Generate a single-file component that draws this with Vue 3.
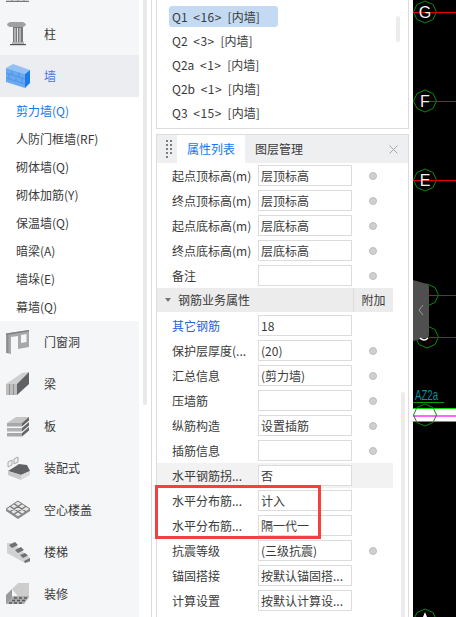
<script setup>
const subs = ['剪力墙(Q)','人防门框墙(RF)','砌体墙(Q)','砌体加筋(Y)','保温墙(Q)','暗梁(A)','墙垛(E)','幕墙(Q)']
const lower = [['door','门窗洞'],['beam','梁'],['slab','板'],['prefab','装配式'],['hollow','空心楼盖'],['stair','楼梯'],['finish','装修']]
const listItems = [
  { name: 'Q1', n: '<16>', active: true },
  { name: 'Q2', n: '<3>' },
  { name: 'Q2a', n: '<1>' },
  { name: 'Q2b', n: '<1>' },
  { name: 'Q3', n: '<15>' },
]
const rowsA = [
  ['起点顶标高(m)','层顶标高',true],['终点顶标高(m)','层顶标高',true],['起点底标高(m)','层底标高',true],['终点底标高(m)','层底标高',true],['备注','',true],
]
const rowsB = [
  { l:'其它钢筋', v:'18', blue:true },
  { l:'保护层厚度(...', v:'(20)', dot:true },
  { l:'汇总信息', v:'(剪力墙)', dot:true },
  { l:'压墙筋', v:'', dot:true },
  { l:'纵筋构造', v:'设置插筋', dot:true },
  { l:'插筋信息', v:'', dot:true },
  { l:'水平钢筋拐...', v:'否', shade:true },
  { l:'水平分布筋...', v:'计入' },
  { l:'水平分布筋...', v:'隔一代一' },
  { l:'抗震等级', v:'(三级抗震)', dot:true },
  { l:'锚固搭接', v:'按默认锚固搭...' },
  { l:'计算设置', v:'按默认计算设...' },
]
</script>

<template>
  <div class="app">
    <aside class="sidebar">
      <div class="nav">
        <div class="nav-item">
          <span class="ico"><svg width="24" height="24" viewBox="0 0 24 24"><rect x="0" y="17" width="23" height="4" fill="#d4d4d4"/><path d="M6 17v4M12 17v4M18 17v4" stroke="#888" fill="none"/><path d="M0 21.500h23" stroke="#777"/></svg></span>
        </div>
        <div class="nav-item">
          <span class="ico"><svg width="24" height="24" viewBox="0 0 24 24">
            <path d="M4 0h13q3 1.500 3 2.500T17 5H4Q1 4 1 2.500T4 0z" fill="#a0a0a0"/>
            <rect x="7" y="5" width="10" height="16" fill="#77797c"/>
            <path d="M9 6v14M11.500 6v14M14 6v14" stroke="#e6e6e6"/>
            <rect x="6" y="20" width="12" height="2" fill="#b4b4b4"/><rect x="4" y="22" width="16" height="1.200" fill="#555"/></svg></span>
          <span class="nav-label">柱</span>
        </div>
        <div class="nav-item on">
          <span class="ico"><svg width="24" height="24" viewBox="0 0 24 24">
            <path d="M0 4l7-4 17 6-5 4z" fill="#94c0f5"/><path d="M0 4l19 6v14L0 18z" fill="#6aa8f0"/><path d="M19 10l5-4v13l-5 5z" fill="#1e7ae8"/>
            <path d="M0 9l19 6M0 14l19 6M6 6.500v5M13 8.500v5M3 10v5M10 12.500v5M16 14v5" stroke="#4a90e4" stroke-width=".8" fill="none"/></svg></span>
          <span class="nav-label on-label">墙</span>
        </div>
        <ul class="subs">
          <li v-for="(s, i) in subs" :key="s" :class="{ cur: i === 0 }">{{ s }}</li>
        </ul>
        <div v-for="it in lower" :key="it[1]" class="nav-item">
          <span class="ico">
            <svg v-if="it[0] === 'door'" width="24" height="24" viewBox="0 0 24 24"><path d="M0 3.500L23 0v17l-11 2V6L5 7v17l-5-1z" fill="#a8a8a8"/><path d="M15 5l5.500-1v8L15 13z" fill="#f5f6f8"/><path d="M0 3.500L23 0v1.200L0 5z" fill="#7d7d7d"/><path d="M1.500 5v18" stroke="#8c8c8c" stroke-width="2"/></svg>
            <svg v-else-if="it[0] === 'beam'" width="24" height="24" viewBox="0 0 24 24"><path d="M0 12L16 1l7-1-12 12z" fill="#cfcfcf"/><path d="M11 12L23 0v12L11 23z" fill="#5f6165"/><rect y="12" width="11" height="11" fill="#bdbdbd"/><path d="M3.500 12v11M7.500 12v11" stroke="#909090"/></svg>
            <svg v-else-if="it[0] === 'slab'" width="24" height="24" viewBox="0 0 24 24"><path d="M1 9L10 3h13l-7 6z" fill="#c6c6c6"/><rect x="1" y="9" width="15" height="3.500" fill="#a8a8a8"/><rect x="1" y="14" width="15" height="3.500" fill="#b2b2b2"/><rect x="1" y="19" width="15" height="3.500" fill="#a8a8a8"/><path d="M16 9l7-6v3.500l-7 6zM16 14l7-6v3.500l-7 6zM16 19l7-6v3.500l-7 6z" fill="#666"/></svg>
            <svg v-else-if="it[0] === 'prefab'" width="24" height="24" viewBox="0 0 24 24"><path d="M2 6l4-2v5l-4 2zM8 3l4-2v5L8 8z" fill="#eee" stroke="#aaa"/><path d="M2 15l8-5 3-2 8 1 3 6-9 4z" fill="#5f6165"/><path d="M2 15l13 4v5L2 19z" fill="#c9c9c9"/><path d="M15 19l9-4v4l-9 5z" fill="#dadada"/></svg>
            <svg v-else-if="it[0] === 'hollow'" width="24" height="24" viewBox="0 0 24 24"><path d="M0 11L12 3l12 8-12 8z" fill="#e4e4e4" stroke="#777"/><path d="M4 8.300l12 8M8 5.700l12 8M20 8.300l-12 8M16 5.700l-12 8" stroke="#777" stroke-width="1.300"/><path d="M0 11l12 8 12-8v2l-12 8-12-8z" fill="#8a8a8a"/></svg>
            <svg v-else-if="it[0] === 'stair'" width="24" height="24" viewBox="0 0 24 24"><path d="M1 3h6l17 15v4l-5 1L1 13z" fill="#d2d2d2"/><path d="M3 5l6-3 3 3-6 3zM9 10l6-3 3 3-6 3zM14 15l5-2 3 2.500-5 2.500zM18 21l6-3v3l-5 2z" fill="#6f7175"/></svg>
            <svg v-else width="24" height="24" viewBox="0 0 24 24"><path d="M6 7l6-6h11v15L18 22z" fill="#cdcdcd"/><path d="M0 13l6-6v10l-6 5z" fill="#9a9a9a"/><path d="M0 22l7-8h16l-5 8z" fill="#adadad"/><path d="M8 16h3M13 16h3M18 16h3M6 18.500h3M11 18.500h3M16 18.500h3M3 21h3M8 21h3M13 21h3" stroke="#55575b" stroke-width="1.500"/></svg>
          </span>
          <span class="nav-label">{{ it[1] }}</span>
        </div>
      </div>
    </aside>

    <div class="gutter"><div class="thumb"></div></div>

    <main class="center">
      <section class="list-panel">
        <ul class="list">
          <li v-for="q in listItems" :key="q.name" :class="{ sel: q.active }">
            <span>{{ q.name }} <i>{{ q.n }}</i> [内墙]</span>
          </li>
        </ul>
        <div class="list-thumb"></div>
      </section>

      <section class="prop-panel">
        <header class="tabs">
          <span class="grip"><b v-for="n in 9" :key="n"></b></span>
          <span class="tab active">属性列表</span>
          <span class="tab">图层管理</span>
          <svg class="close" width="9" height="9" viewBox="0 0 9 9"><path d="M.5.5l8 8M8.500.5l-8 8" stroke="#a8a8a8" fill="none"/></svg>
        </header>
        <div class="props">
          <div v-for="r in rowsA" :key="r[0]" class="row">
            <span class="lab">{{ r[0] }}</span>
            <span class="val">{{ r[1] }}</span>
            <span class="dot"></span>
          </div>
          <div class="group">
            <span class="tri"></span>
            <span class="gname">钢筋业务属性</span>
            <span class="gextra">附加</span>
          </div>
          <div v-for="(r, i) in rowsB" :key="i" class="row" :class="{ shade: r.shade }">
            <span class="lab" :class="{ blue: r.blue }">{{ r.l }}</span>
            <span class="val">{{ r.v }}</span>
            <span v-if="r.dot" class="dot"></span>
          </div>
          <div class="redbox"></div>
        </div>
        <div class="prop-thumb"></div>
      </section>
    </main>

    <section class="canvas">
      <svg width="43" height="617" viewBox="413 0 43 617">
        <g fill="none" stroke="#0a8a0a" stroke-width="1">
          <path d="M425 1l8 3.500 3.500 7.500-3.500 7.500-8 3.500-8-3.500-3.500-7.500 3.500-7.500z"/>
          <path d="M425 90l8 3.500 3.500 7.500-3.500 7.500-8 3.500-8-3.500-3.500-7.500 3.500-7.500z"/>
          <path d="M425 169l8 3.500 3.500 7.500-3.500 7.500-8 3.500-8-3.500-3.500-7.500 3.500-7.500z"/>
          <path d="M427 284l8 3.500 3.500 7.500-3.500 7.500-8 3.500-8-3.500-3.500-7.500 3.500-7.500z"/>
          <path d="M427 326l8 3.500 3.500 7.500-3.500 7.500-8 3.500-8-3.500-3.500-7.500 3.500-7.500z"/>
          <path d="M425 609l8 3.500 3.500 7.500-3.500 7.500-8 3.500-8-3.500-3.500-7.500 3.500-7.500z"/>
        </g>
        <g stroke="#e00000" stroke-width="1">
          <path d="M413 12.500h43M425 101.500h31M413 180.500h43M429 295.500h27M429 337.500h27"/>
        </g>
        <text x="425" y="18" class="axis">G</text>
        <text x="425" y="107" class="axis">F</text>
        <text x="425" y="186" class="axis">E</text>
        <text x="415" y="400" class="tag" textLength="23" lengthAdjust="spacingAndGlyphs">AZ2a</text>
        <path d="M413 402.500h31" stroke="#00a000"/>
        <rect x="413" y="408" width="43" height="13" fill="#fff"/>
        <path d="M413 408.500h43M413 421.500h43" stroke="#00e000"/>
        <path d="M413 416h43" stroke="#ff30ff" stroke-width="1.500"/>
        <path d="M425 404l8 3.500 3.500 7.500-3.500 7.500-8 3.500-8-3.500-3.500-7.500 3.500-7.500z" fill="none" stroke="#0a8a0a"/>
        <path d="M413 280l14 4q2 .5 2 3v48q0 3-3 3l-13 3z" fill="#4f4f4f"/>
        <path d="M423 305l-4 5 4 5" fill="none" stroke="#9a9a9a" stroke-width="1"/>
        <path d="M420 338q4 4 8 0" fill="none" stroke="#fff" stroke-width="1.500"/>
        <path d="M425 612l-2 5h4z" fill="#fff"/>
      </svg>
    </section>
  </div>
</template>

<style>
html, body { margin: 0; background: #fff; }
</style>

<style scoped>
.app {
  width: 456px; height: 617px; display: flex; overflow: hidden; background: #fff;
  font: 12px/1 "Noto Sans CJK SC", "Liberation Sans", sans-serif; color: #3a3a3a;
}
.sidebar { width: 139px; flex: none; background: #f5f6f8; overflow: hidden; }
.nav { margin-top: -29px; }
.nav-item { height: 42px; display: flex; align-items: center; box-sizing: border-box; padding-left: 6px; }
.nav-item.on { background: #ecedf1; }
.on-label { color: #4c74d9; }
.ico { width: 24px; height: 24px; flex: none; display: block; }
.ico svg { display: block; }
.nav-label { margin-left: 14px; }
.subs { list-style: none; margin: 0; padding: 0; background: #fff; }
.subs li { height: 28px; line-height: 28px; padding-left: 16px; }
.subs li.cur { color: #1677e6; }
.gutter { width: 13px; flex: none; box-sizing: border-box; border-right: 1px solid #dcdcdc; padding-left: 4px; }
.thumb { width: 4px; height: 405px; background: #e9e9e9; border-radius: 0 0 2px 2px; }
.center { width: 261px; flex: none; box-sizing: border-box; padding: 0 4px; display: flex; flex-direction: column; gap: 5px; }
.list-panel { height: 129px; flex: none; box-sizing: border-box; border: 1px solid #dcdcdc; border-top: none; position: relative; padding: 6px 0 0 12px; }
.list { list-style: none; margin: 0; padding: 0; }
.list li { height: 24px; display: flex; align-items: flex-start; }
.list li span { display: block; height: 21px; line-height: 21px; padding: 0 18px 0 3px; border-radius: 3px; white-space: pre; word-spacing: 3px; }
.list li.sel span { background: #c3daf2; }
.list i { font-style: normal; letter-spacing: .5px; }
.list-thumb { position: absolute; right: 8px; top: 16px; width: 4px; height: 26px; background: #ececec; border-radius: 2px; }
.prop-panel { flex: 1; min-height: 0; box-sizing: border-box; border: 1px solid #dcdcdc; border-bottom: none; position: relative; }
.tabs { height: 28px; background: #eeeff1; display: flex; align-items: center; position: relative; }
.grip { width: 6px; margin: 0 5px 0 9px; display: grid; grid-template-columns: repeat(2, 2px); gap: 2px; }
.grip b { width: 2px; height: 2px; background: #7d7d7d; display: block; }
.tab { height: 28px; line-height: 28px; padding: 0 10px; }
.tab.active { background: #fff; color: #1677e6; width: 48px; }
.close { position: absolute; right: 10px; top: 10px; }
.props { position: relative; }
.row { height: 25px; display: flex; align-items: center; width: 236px; }
.row.shade { background: #f2f2f2; }
.lab { width: 86px; margin-left: 15px; flex: none; white-space: nowrap; }
.lab.blue { color: #2a62d8; }
.val { width: 94px; height: 21px; box-sizing: border-box; border: 1px solid #dcdcdc; background: #fff; line-height: 19px; padding-left: 2px; flex: none; white-space: nowrap; }
.dot { width: 8px; height: 8px; box-sizing: border-box; border-radius: 50%; background: #cfcfcf; border: 1px solid #bdbdbd; margin-left: 17px; flex: none; }
.group { height: 24px; width: 236px; background: #ececec; display: flex; align-items: center; margin: 0 0 1px; position: relative; }
.tri { width: 0; height: 0; border: 3px solid transparent; border-top: 4px solid #777; border-bottom: none; margin-left: 8px; }
.gname { margin-left: 7px; }
.gextra { position: absolute; left: 196px; top: 0; height: 24px; width: 40px; box-sizing: border-box; border-left: 1px solid #dcdcdc; line-height: 24px; text-align: center; }
.redbox { position: absolute; left: -2px; top: 322px; width: 166px; height: 54px; box-sizing: border-box; border: 3px solid #f44040; pointer-events: none; }
.prop-thumb { position: absolute; right: 3px; top: 257px; bottom: 0; width: 4px; background: #ececec; border-radius: 2px 2px 0 0; }
.canvas { flex: 1; background: #000; overflow: hidden; }
.canvas svg { display: block; }
.axis { fill: #f4f4f4; font: 16px "Liberation Sans", sans-serif; text-anchor: middle; }
.tag { fill: #0a8fa0; font: 14px "Liberation Sans", sans-serif; }
</style>
